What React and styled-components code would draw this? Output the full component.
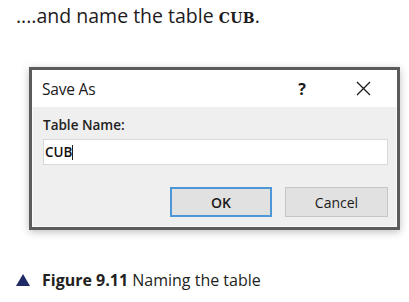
import React from "react";
import styled, { createGlobalStyle } from "styled-components";

const GlobalStyle = createGlobalStyle`
  html, body {
    margin: 0;
    padding: 0;
    background: #ffffff;
  }
`;

const Page = styled.div`
  width: 409px;
  height: 302px;
  display: flex;
  flex-direction: column;
  background: #ffffff;
  font-family: "Open Sans", "Liberation Sans", sans-serif;
  color: #1d1b1c;
`;

const Lead = styled.p`
  margin: 5px 0 0 16px;
  font-size: 19.5px;
  line-height: 22px;
`;

const Code = styled.span`
  font-family: "DejaVu Serif", "Liberation Serif", serif;
  font-weight: 700;
  font-size: 14px;
  letter-spacing: 0.3px;
`;

const DialogFrame = styled.div`
  margin: 38px 9px 0 29px;
  height: 163px;
  box-sizing: border-box;
  border: 3px solid #5b5b5b;
  box-shadow: 0 2px 8px rgba(0, 0, 0, 0.25);
  display: flex;
  flex-direction: column;
  font-family: "Open Sans", "Liberation Sans", sans-serif;
`;

const TitleBar = styled.div`
  height: 37px;
  background: #ffffff;
  display: flex;
  align-items: center;
  padding: 0 0 0 10px;
`;

const Title = styled.span`
  flex: 1;
  font-size: 15.5px;
  letter-spacing: -0.2px;
  color: #1a1a1a;
`;

const TitleButton = styled.span`
  width: ${p => p.$width}px;
  display: flex;
  justify-content: center;
  font-size: 16px;
  font-weight: 700;
  color: #1a1a1a;
`;

const Body = styled.div`
  flex: 1;
  background: #efefef;
  border: 1px solid #fafafa;
  border-top: none;
  padding: 9px 8px 0 10px;
  display: flex;
  flex-direction: column;
`;

const Label = styled.div`
  font-size: 13.5px;
  font-weight: 600;
  color: #222;
  line-height: 18px;
`;

const Input = styled.div`
  margin-top: 5px;
  height: 26px;
  box-sizing: border-box;
  background: #ffffff;
  border: 1px solid #d9d9d9;
  display: flex;
  align-items: center;
  padding-left: 1px;
  font-size: 13.5px;
  font-weight: 600;
  color: #111;
`;

const Caret = styled.span`
  display: inline-block;
  width: 1px;
  height: 15px;
  background: #222;
`;

const ButtonRow = styled.div`
  margin-top: 22px;
  display: flex;
  justify-content: flex-end;
  gap: 13px;
`;

const Button = styled.div`
  width: ${p => (p.$wide ? 103 : 102)}px;
  height: 30px;
  box-sizing: border-box;
  background: #e1e1e1;
  border: ${p => (p.$primary ? "2px solid #4d97d6" : "1px solid #c6c6c6")};
  display: flex;
  align-items: center;
  justify-content: center;
  font-size: 14px;
  font-weight: ${p => (p.$primary ? 600 : 500)};
  color: #1a1a1a;
`;

const Caption = styled.div`
  margin: 39px 0 0 16px;
  display: flex;
  align-items: center;
  gap: 12px;
  font-size: 16px;
  color: #231f20;
`;

const FigureLabel = styled.b`
  font-weight: 700;
`;

const App = () => (
  <Page>
    <GlobalStyle />
    <Lead>
      ....and name the table <Code>CUB</Code>.
    </Lead>
    <DialogFrame>
      <TitleBar>
        <Title>Save As</Title>
        <TitleButton $width={54}>?</TitleButton>
        <TitleButton $width={68}>
          <svg width="15" height="15" viewBox="0 0 15 15">
            <path d="M1 1 L14 14 M14 1 L1 14" stroke="#1a1a1a" strokeWidth="1.3" />
          </svg>
        </TitleButton>
      </TitleBar>
      <Body>
        <Label>Table Name:</Label>
        <Input>
          CUB<Caret />
        </Input>
        <ButtonRow>
          <Button $primary>OK</Button>
          <Button $wide>Cancel</Button>
        </ButtonRow>
      </Body>
    </DialogFrame>
    <Caption>
      <svg width="14" height="12" viewBox="0 0 14 12">
        <path d="M7 0 L14 12 L0 12 Z" fill="#1f2a66" />
      </svg>
      <span>
        <FigureLabel>Figure 9.11</FigureLabel> Naming the table
      </span>
    </Caption>
  </Page>
);

export default App;
